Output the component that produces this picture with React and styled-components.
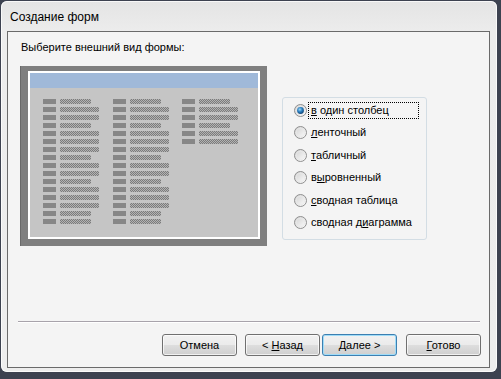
import React from "react";
import styled, { createGlobalStyle } from "styled-components";

const Global = createGlobalStyle`
  html, body { margin: 0; padding: 0; }
  body {
    width: 501px; height: 379px; overflow: hidden;
    background: #3d4250;
    font-family: "Liberation Sans", Arial, sans-serif;
  }
`;

const Window = styled.div`
  box-sizing: border-box;
  margin: 1px 0 0 1px;
  width: 496px;
  height: 371px;
  border-radius: 6px;
  background: linear-gradient(180deg, #e4e4e4 0%, #ececec 8%, #ededed 100%);
  box-shadow: inset 0 0 0 1px rgba(255,255,255,0.75);
  display: flex;
  flex-direction: column;
  padding: 0 7px 4px 6px;
`;

const Title = styled.div`
  height: 30px;
  display: flex;
  align-items: center;
  padding: 2px 0 0 3px;
  box-sizing: border-box;
  font-size: 12px;
  color: #000;
`;

const Panel = styled.div`
  flex: 1;
  border: 1px solid #6a6a6a;
  background: #f4f4f4;
  display: flex;
  flex-direction: column;
`;

const Heading = styled.div`
  margin: 9px 0 0 13px;
  font-size: 11px;
  line-height: 13px;
  color: #000;
`;

const Body = styled.div`
  display: flex;
  align-items: flex-start;
  margin: 12px 0 0 13px;
`;

const Preview = styled.div`
  box-sizing: border-box;
  width: 246px;
  height: 180px;
  border-style: solid;
  border-color: #7f7f7f;
  border-width: 5px 7px 7px 7px;
  box-shadow: -1px 0 0 #6a6a6a;
`;

const PreviewInner = styled.div`
  box-sizing: border-box;
  height: 100%;
  border: 2px solid #ffffff;
  background: #c5c5c5;
  display: flex;
  flex-direction: column;
`;

const BlueBar = styled.div`
  height: 15px;
  background: #a0b9d9;
`;

const Columns = styled.div`
  display: flex;
  gap: 13.5px;
  padding: 11px 0 0 13px;
`;

const Column = styled.div`
  width: 56px;
  display: flex;
  flex-direction: column;
  gap: 3px;
`;

const FieldRow = styled.div`
  display: flex;
  gap: 4px;
  height: 5px;
`;

const FieldLabel = styled.div`
  width: 13px;
  height: 5px;
  background: #878787;
`;

const FieldValue = styled.div`
  width: ${(p) => (p.$long ? 39 : 31)}px;
  height: 5px;
  background-image: repeating-conic-gradient(#7b7b7b 0 25%, #b3b3b3 0 50%);
  background-size: 2px 2px;
`;

const Group = styled.div`
  box-sizing: border-box;
  margin: 31px 0 0 15px;
  width: 145px;
  height: 143px;
  border: 1px solid #d3dde4;
  border-radius: 3px;
  padding: 4px 0 0 11px;
  display: flex;
  flex-direction: column;
  gap: 5.4px;
`;

const Option = styled.div`
  display: flex;
  align-items: center;
  height: 17px;
  gap: 1px;
`;

const OptionText = styled.span`
  box-sizing: border-box;
  height: 17px;
  line-height: 15px;
  display: inline-block;
  padding: 0 2px;
  border: 1px dotted ${(p) => (p.$focus ? "#000" : "transparent")};
  width: ${(p) => (p.$focus ? "111px" : "auto")};
  font-size: 11px;
  color: #000;
  white-space: pre;
`;

const Key = styled.span`
  text-decoration: underline;
  text-underline-offset: 1px;
`;

const Separator = styled.div`
  margin: 75px 9px 0 10px;
  height: 1px;
  background: #a8a3ab;
  box-shadow: 0 1px 0 #ffffff;
`;

const ButtonRow = styled.div`
  display: flex;
  justify-content: flex-end;
  padding: 12px 8px 0 0;
`;

const Button = styled.div`
  box-sizing: border-box;
  width: 75px;
  height: 22px;
  margin-left: ${(p) => p.$gap}px;
  border: 1px solid ${(p) => (p.$default ? "#3c7fb1" : "#707070")};
  border-radius: 3px;
  background: linear-gradient(180deg, #f2f2f2 0%, #ebebeb 48%, #dddddd 52%, #cfcfcf 100%);
  box-shadow: inset 0 0 0 1px ${(p) => (p.$default ? "#9fdcf8" : "rgba(255,255,255,0.7)")};
  display: flex;
  align-items: center;
  justify-content: center;
  font-size: 11px;
  color: #000;
`;

const ButtonText = styled.span`
  white-space: pre;
`;

const Radio = ({ checked }) => (
  <svg width="13" height="13" viewBox="0 0 13 13">
    <defs>
      <linearGradient id="rg" x1="0" y1="0" x2="1" y2="1">
        <stop offset="0" stopColor="#cfcfcf" />
        <stop offset="1" stopColor="#ffffff" />
      </linearGradient>
      <radialGradient id="dot" cx="0.4" cy="0.35" r="0.7">
        <stop offset="0" stopColor="#9fd8f6" />
        <stop offset="0.5" stopColor="#2a7fc0" />
        <stop offset="1" stopColor="#0f3e6e" />
      </radialGradient>
    </defs>
    <circle cx="6.5" cy="6.5" r="6" fill="url(#rg)" stroke="#8f8f8f" strokeWidth="1" />
    <circle cx="6.5" cy="6.5" r="4.3" fill="none" stroke="#e8e8e8" strokeWidth="0.8" />
    {checked && <circle cx="6.5" cy="6.5" r="3.4" fill="url(#dot)" />}
  </svg>
);

const col1 = [0, 1, 1, 0, 1, 1, 1, 0, 1, 1, 0, 1, 1, 1, 0, 0];
const col3 = [0, 1, 1, 0, 1, 1];

const options = [
  [<Key key="k">в</Key>, " один столбец"],
  [<Key key="k">л</Key>, "енточный"],
  [<Key key="k">т</Key>, "абличный"],
  ["в", <Key key="k">ы</Key>, "ровненный"],
  [<Key key="k">с</Key>, "водная таблица"],
  ["сводная д", <Key key="k">и</Key>, "аграмма"],
];

export default function App() {
  return (
    <>
      <Global />
      <Window>
        <Title>Создание форм</Title>
        <Panel>
          <Heading>Выберите внешний вид формы:</Heading>
          <Body>
            <Preview>
              <PreviewInner>
                <BlueBar />
                <Columns>
                  {[col1, col1, col3].map((col, ci) => (
                    <Column key={ci}>
                      {col.map((l, i) => (
                        <FieldRow key={i}>
                          <FieldLabel />
                          <FieldValue $long={!!l} />
                        </FieldRow>
                      ))}
                    </Column>
                  ))}
                </Columns>
              </PreviewInner>
            </Preview>
            <Group>
              {options.map((parts, i) => (
                <Option key={i}>
                  <Radio checked={i === 0} />
                  <OptionText $focus={i === 0}>{parts}</OptionText>
                </Option>
              ))}
            </Group>
          </Body>
          <Separator />
          <ButtonRow>
            <Button $gap={0}><ButtonText>Отмена</ButtonText></Button>
            <Button $gap={8}><ButtonText>{"< "}<Key>Н</Key>азад</ButtonText></Button>
            <Button $gap={2} $default>
              <ButtonText><Key>Д</Key>{"алее >"}</ButtonText>
            </Button>
            <Button $gap={9}>
              <ButtonText><Key>Г</Key>отово</ButtonText>
            </Button>
          </ButtonRow>
        </Panel>
      </Window>
    </>
  );
}
